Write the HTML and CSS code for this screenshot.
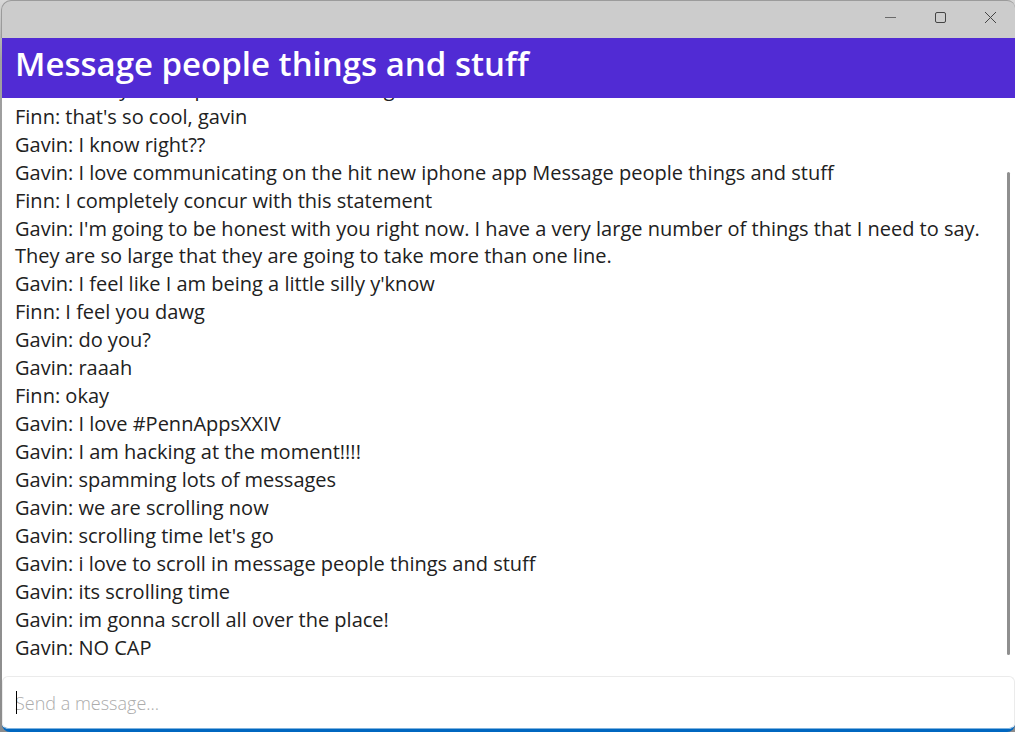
FILE: index.html
```html
<!DOCTYPE html>
<html lang="en">
<head>
<meta charset="utf-8">
<title>Message people things and stuff</title>
<link rel="stylesheet" href="styles.css">
</head>
<body>
<div class="window">
  <div class="titlebar">
    <button class="control" aria-label="Minimize"><svg class="minimize" width="11" height="11" viewBox="0 0 11 11"><path d="M0 5.5H11"/></svg></button>
    <button class="control" aria-label="Maximize"><svg width="11" height="11" viewBox="0 0 11 11"><rect x=".5" y=".5" width="10" height="10" rx="1.5"/></svg></button>
    <button class="control" aria-label="Close"><svg width="11" height="11" viewBox="0 0 11 11"><path d="M0 0L11 11M11 0L0 11"/></svg></button>
  </div>
  <header class="header"><h1 class="heading">Message people things and stuff</h1></header>
  <main class="chat">
    <div class="messages">
      <p class="message">Gavin: and you are part of the whole bug</p>
      <p class="message">Finn: that's so cool, gavin</p>
      <p class="message">Gavin: I know right??</p>
      <p class="message">Gavin: I love communicating on the hit new iphone app Message people things and stuff</p>
      <p class="message">Finn: I completely concur with this statement</p>
      <p class="message">Gavin: I'm going to be honest with you right now. I have a very large number of things that I need to say. They are so large that they are going to take more than one line.</p>
      <p class="message">Gavin: I feel like I am being a little silly y'know</p>
      <p class="message">Finn: I feel you dawg</p>
      <p class="message">Gavin: do you?</p>
      <p class="message">Gavin: raaah</p>
      <p class="message">Finn: okay</p>
      <p class="message">Gavin: I love #PennAppsXXIV</p>
      <p class="message">Gavin: I am hacking at the moment!!!!</p>
      <p class="message">Gavin: spamming lots of messages</p>
      <p class="message">Gavin: we are scrolling now</p>
      <p class="message">Gavin: scrolling time let's go</p>
      <p class="message">Gavin: i love to scroll in message people things and stuff</p>
      <p class="message">Gavin: its scrolling time</p>
      <p class="message">Gavin: im gonna scroll all over the place!</p>
      <p class="message">Gavin: NO CAP</p>
    </div>
    <div class="scroll-thumb"></div>
  </main>
  <form class="composer">
    <input class="entry" type="text" placeholder="Send a message..." aria-label="Send a message">
    <span class="caret"></span>
  </form>
</div>
</body>
</html>
```
FILE: styles.css
```css
* { box-sizing: border-box; }
body {
  margin: 0;
  background: #a0a0a0;
  font-family: "Open Sans", "Noto Sans", sans-serif;
  color: #212121;
}
.window {
  display: flex;
  flex-direction: column;
  height: 100vh;
  padding-left: 1px;
  background: linear-gradient(#d8d8d8, #a0a0a0 60px, #8c8c8c);
}
.titlebar {
  display: flex;
  justify-content: flex-end;
  flex: none;
  height: 38px;
  border: 1px solid #9b9b9b;
  border-right: 0;
  border-bottom: 0;
  border-radius: 10px 8px 0 0;
  background: #cccccc;
}
.control {
  display: flex;
  justify-content: center;
  align-items: center;
  width: 50px;
  height: 33px;
  padding: 0;
  border: 0;
  background: none;
}
.control svg {
  fill: none;
  stroke: #444;
  stroke-width: 1;
}
.control .minimize { stroke: #6a6a6a; }
.header {
  flex: none;
  height: 60px;
  margin-left: 1px;
  padding-left: 13px;
  background: #512bd4;
}
.heading {
  margin: 0;
  font-family: "Open Sans", "Noto Sans", sans-serif;
  font-size: 33px;
  font-weight: 600;
  line-height: 52px;
  color: #fff;
}
.chat {
  position: relative;
  display: flex;
  flex-direction: column;
  flex: 1;
  min-height: 0;
  margin-left: 1px;
  background: #fff;
}
.messages {
  display: flex;
  flex-direction: column;
  justify-content: flex-end;
  flex: 1;
  gap: 1px;
  min-height: 0;
  overflow: hidden;
  padding: 0 20px 15px 13px;
}
.message {
  flex: none;
  margin: 0;
  font-size: 20px;
  line-height: 27px;
}
.scroll-thumb {
  position: absolute;
  top: 74px;
  right: 5px;
  bottom: 21px;
  width: 3px;
  border-radius: 2px;
  background: #8f8f8f;
}
.composer {
  position: relative;
  flex: none;
  height: 56px;
  margin-left: 1px;
  border-bottom: 3px solid #0067c0;
  border-radius: 0 0 8px 8px;
  background: #fff;
}
.entry {
  display: block;
  width: 100%;
  height: 53px;
  padding: 0 13px 0 12px;
  border: 1px solid #ebebeb;
  border-bottom-color: #7fb3df;
  border-radius: 6px;
  outline: 0;
  background: #fff;
  font: 18px "Open Sans", "Noto Sans", sans-serif;
  color: #212121;
}
.entry::placeholder {
  font-weight: 300;
  color: #acacac;
}
.caret {
  position: absolute;
  top: 15px;
  left: 14px;
  width: 1px;
  height: 23px;
  background: #000;
}
```
